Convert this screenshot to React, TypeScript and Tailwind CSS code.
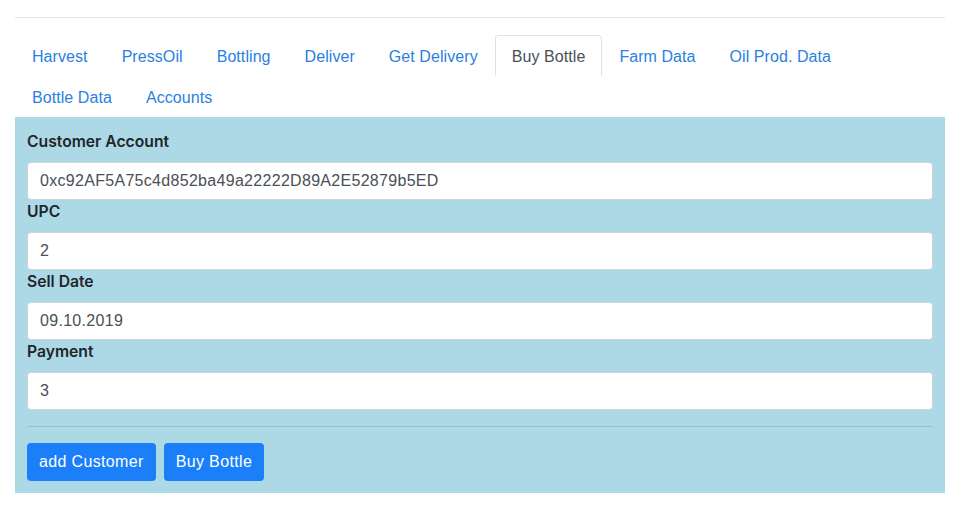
import React from "react";

const tabs = [
  "Harvest",
  "PressOil",
  "Bottling",
  "Deliver",
  "Get Delivery",
  "Buy Bottle",
  "Farm Data",
  "Oil Prod. Data",
  "Bottle Data",
  "Accounts",
];

const fields = [
  { label: "Customer Account", value: "0xc92AF5A75c4d852ba49a22222D89A2E52879b5ED" },
  { label: "UPC", value: "2" },
  { label: "Sell Date", value: "09.10.2019" },
  { label: "Payment", value: "3" },
];

export default function App() {
  return (
    <div
      className="min-h-[507px] bg-white pl-[15px] pr-[21px] pt-[17px] text-[16px] leading-6 text-[#212529]"
      style={{ fontFamily: '"Liberation Sans", Arial, sans-serif' }}
    >
      <hr className="border-0 border-t border-[#e5e5e5]" />
      <ul className="mt-[17px] flex flex-wrap">
        {tabs.map((t) => {
          const active = t === "Buy Bottle";
          return (
            <li key={t}>
              <a
                className={
                  "block rounded-t-[4px] border px-4 pb-[7px] pt-[9px] leading-[23px] tracking-[0.07px] " +
                  (active
                    ? "border-[#dee2e6] border-b-white bg-white text-[#495057]"
                    : "border-transparent text-[#2a7fe0]")
                }
              >
                {t}
              </a>
            </li>
          );
        })}
      </ul>
      <div className="bg-[#add8e6] px-3 pb-3 pt-[13px]">
        {fields.map((f) => (
          <div key={f.label}>
            <label
              className="mb-2 block text-[15.7px] font-semibold text-[#212529]"
              style={{ fontFamily: 'Inter, "Liberation Sans", sans-serif' }}
            >
              {f.label}
            </label>
            <input
              readOnly
              value={f.value}
              className="block h-[38px] w-full rounded-[4px] border border-[#ced4da] bg-white px-3 text-[16px] tracking-[0.3px] text-[#495057] outline-none"
            />
          </div>
        ))}
        <hr className="my-4 border-0 border-t border-[#96c1cf]" />
        <div className="flex gap-2">
          <button className="h-[38px] rounded-[4px] bg-[#1a7ff8] px-3 tracking-[0.35px] text-white">add Customer</button>
          <button className="h-[38px] rounded-[4px] bg-[#1a7ff8] px-3 tracking-[0.35px] text-white">Buy Bottle</button>
        </div>
      </div>
    </div>
  );
}
